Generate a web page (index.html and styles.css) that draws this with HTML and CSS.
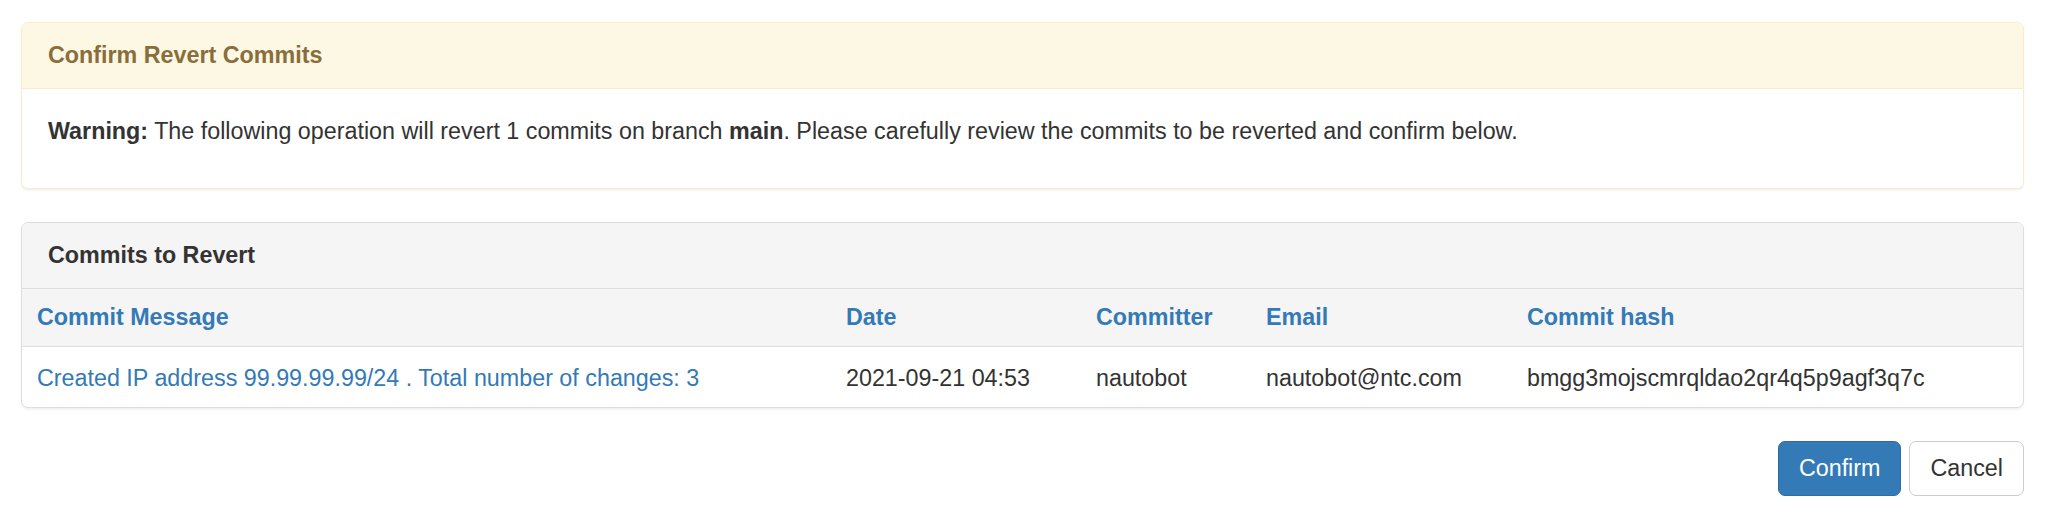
FILE: index.html
```html
<!DOCTYPE html>
<html>
<head>
<meta charset="utf-8">
<link rel="stylesheet" href="styles.css">
</head>
<body>
<div class="page">
  <div class="panel panel-warning">
    <div class="panel-heading"><strong>Confirm Revert Commits</strong></div>
    <div class="panel-body">
      <p><strong>Warning:</strong> The following operation will revert 1 commits on branch <strong>main</strong>. Please carefully review the commits to be reverted and confirm below.</p>
    </div>
  </div>

  <div class="panel panel-default">
    <div class="panel-heading"><strong>Commits to Revert</strong></div>
    <table class="table">
      <colgroup>
        <col class="c-msg"><col class="c-date"><col class="c-committer"><col class="c-email"><col class="c-hash">
      </colgroup>
      <thead>
        <tr>
          <th><a href="#">Commit Message</a></th>
          <th><a href="#">Date</a></th>
          <th><a href="#">Committer</a></th>
          <th><a href="#">Email</a></th>
          <th><a href="#">Commit hash</a></th>
        </tr>
      </thead>
      <tbody>
        <tr>
          <td><a href="#">Created IP address 99.99.99.99/24 . Total number of changes: 3</a></td>
          <td>2021-09-21 04:53</td>
          <td>nautobot</td>
          <td>nautobot@ntc.com</td>
          <td>bmgg3mojscmrqldao2qr4q5p9agf3q7c</td>
        </tr>
      </tbody>
    </table>
  </div>

  <div class="actions">
    <button class="btn btn-primary" type="button">Confirm</button>
    <button class="btn btn-default" type="button">Cancel</button>
  </div>
</div>
</body>
</html>
```

FILE: styles.css
```css
* { box-sizing: border-box; }
html, body { margin: 0; padding: 0; background: #fff; }
body {
  font-family: "Liberation Sans", Arial, Helvetica, sans-serif;
  font-size: 23.3px;
  line-height: 33.4px;
  color: #333;
}
.page { padding: 22px 24px 0 21px; }
a { color: #337ab7; text-decoration: none; }
strong { font-weight: bold; }

.panel {
  border: 1px solid transparent;
  border-radius: 7px;
  box-shadow: 0 2px 2px rgba(0,0,0,0.05);
  margin-bottom: 33px;
  background: #fff;
  overflow: hidden;
}
.panel-heading {
  padding: 16px 26px 16px 26px;
  border-bottom: 1px solid transparent;
}
.panel-body { padding: 26px 26px 26px 26px; }
.panel-body p { margin: 0 0 13px 0; }

.panel-warning { border-color: #faebcc; }
.panel-warning > .panel-heading {
  background: #fcf8e3;
  border-bottom-color: #faebcc;
  color: #8a6d3b;
}
.panel-default { border-color: #ddd; }
.panel-default > .panel-heading {
  background: #f5f5f5;
  border-bottom-color: #ddd;
  color: #333;
}

.table {
  width: 100%;
  border-collapse: collapse;
  table-layout: fixed;
}
.c-msg { width: 809px; }
.c-date { width: 250px; }
.c-committer { width: 170px; }
.c-email { width: 261px; }
.table th, .table td {
  text-align: left;
  padding: 12px 15px 11px 15px;
  white-space: nowrap;
  vertical-align: top;
}
.table thead th {
  background: #f5f5f5;
  font-weight: bold;
  border-bottom: 1px solid #ddd;
}
.table tbody td { padding: 15px 15px 12px 15px; }

.actions {
  display: flex;
  justify-content: flex-end;
  gap: 8px;
  margin-top: 2px;
}
.btn {
  font-family: inherit;
  font-size: 23.3px;
  line-height: 33px;
  padding: 10px 20px;
  border: 1px solid transparent;
  border-radius: 7px;
  cursor: pointer;
}
.btn-primary { background: #337ab7; border-color: #2e6da4; color: #fff; }
.btn-default { background: #fff; border-color: #ccc; color: #333; }
```
